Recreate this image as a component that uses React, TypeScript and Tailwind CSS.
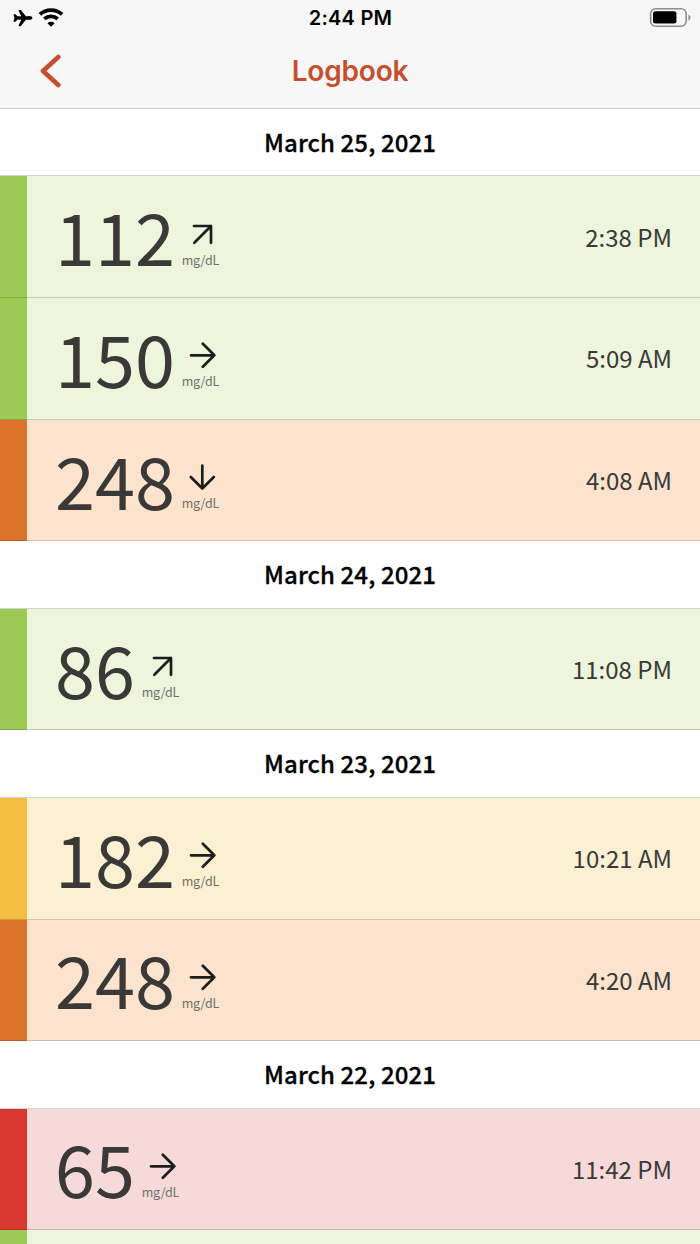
import { IoAirplane } from "react-icons/io5"

type Level = "target" | "elevated" | "high" | "low"
type Trend = "rising" | "steady" | "falling"

interface Reading {
  value: number
  trend: Trend
  level: Level
  time:  string
}

interface Day {
  date:     string
  readings: Reading[]
}

const BAR_CLASS: Record<Level, string> = {
  target:   "bg-[#9cca54]",
  elevated: "bg-[#f5be43]",
  high:     "bg-[#dd742b]",
  low:      "bg-[#d93830]",
}
const ROW_CLASS: Record<Level, string> = {
  target:   "bg-[#edf5dd]",
  elevated: "bg-[#fcf0d3]",
  high:     "bg-[#fbe3ce]",
  low:      "bg-[#f6dada]",
}
const TREND_PATH: Record<Trend, string> = {
  rising:  "M6 6H23V22.8M23 6L6.3 22.8",
  steady:  "M3 14.3H26.3M14.8 2.8L26.3 14.3L14.8 25.8",
  falling: "M14.3 2.5V25.5M2.8 14L14.3 25.5L25.8 14",
}

const DAYS: Day[] = [
  {
    date: "March 25, 2021",
    readings: [
      { value: 112, trend: "rising",  level: "target", time: "2:38 PM" },
      { value: 150, trend: "steady",  level: "target", time: "5:09 AM" },
      { value: 248, trend: "falling", level: "high",   time: "4:08 AM" },
    ],
  },
  {
    date: "March 24, 2021",
    readings: [{ value: 86, trend: "rising", level: "target", time: "11:08 PM" }],
  },
  {
    date: "March 23, 2021",
    readings: [
      { value: 182, trend: "steady", level: "elevated", time: "10:21 AM" },
      { value: 248, trend: "steady", level: "high",     time: "4:20 AM" },
    ],
  },
  {
    date: "March 22, 2021",
    readings: [{ value: 65, trend: "steady", level: "low", time: "11:42 PM" }],
  },
]

function StatusBar() {
  return (
    <div className="flex h-[35px] items-center justify-between pl-[13px] pr-[9px]">
      <div className="flex w-[77px] items-center gap-[5px]">
        <IoAirplane className="h-5 w-5 text-black" />
        <svg viewBox="0 0 26 20" className="h-5 w-[26px] shrink-0" fill="none" stroke="#000" strokeWidth="3.8">
          <path d="M1.9 6.4A16.6 16.6 0 0 1 24.1 6.4" />
          <path d="M6.3 10.9A10.3 10.3 0 0 1 19.7 10.9" />
          <path d="M13 18.8L9.4 15.2A5.2 5.2 0 0 1 16.6 15.2Z" fill="#000" stroke="none" />
        </svg>
      </div>
      <span className="text-[20px] font-semibold leading-none tracking-[0.2px] text-black">2:44 PM</span>
      <div className="flex w-20 justify-end">
        <svg viewBox="0 0 42 20" className="h-5 w-[42px]">
          <rect x="1.6" y="0.8" width="35.6" height="17.4" rx="5" fill="none" stroke="#8e8e8e" strokeWidth="1.6" />
          <rect x="4" y="3.2" width="23.4" height="12.4" rx="2.4" fill="#000" />
          <path d="M39.4 6.6C42.2 7.6 42.2 11.4 39.4 12.4Z" fill="#8e8e8e" />
        </svg>
      </div>
    </div>
  )
}

function ReadingRow({ reading }: { reading: Reading }) {
  return (
    <div className={`relative flex h-[121.66px] ${ROW_CLASS[reading.level]}`}>
      <div className={`w-[27px] ${BAR_CLASS[reading.level]}`} />
      <div className="flex flex-1 items-center justify-between pl-7 pr-7">
        <div className="flex items-center">
          <span className="pb-[4px] text-[72px] leading-[104px] text-[#3a3937]">{reading.value}</span>
          <div className="ml-[7px] flex w-[37px] flex-col items-center pt-[14px]">
            <svg viewBox="0 0 28 28" className="ml-[3px] h-7 w-7" fill="none" stroke="#1d1d1b" strokeWidth="2.7" strokeLinecap="round" strokeLinejoin="round">
              <path d={TREND_PATH[reading.trend]} />
            </svg>
            <span className="mt-[3px] text-[12.5px] leading-[18px] tracking-[-0.15px] text-[#6f706a]">mg/dL</span>
          </div>
        </div>
        <span className="pb-[1px] text-[24px] leading-9 text-[#3a3937]">{reading.time}</span>
      </div>
      <div className="absolute inset-x-0 bottom-0 h-px bg-black/17" />
    </div>
  )
}

export default function App() {
  return (
    <div className="h-[1244px] w-[700px] overflow-hidden bg-white font-['Noto_Sans_CJK_SC',sans-serif]">
      <header className="h-[109px] border-b border-[#cdcdcd] bg-[#f7f7f7] font-[Inter,sans-serif]">
        <StatusBar />
        <div className="flex h-[71px] items-center justify-between px-10">
          <svg viewBox="0 0 22 34" className="h-[34px] w-[22px]" fill="none" stroke="#c4502f" strokeWidth="4.6" strokeLinecap="round" strokeLinejoin="round">
            <path d="M18.3 3L3 17L18.3 31" />
          </svg>
          <h1 className="text-[28px] font-semibold leading-none tracking-[-0.2px] text-[#c4502f]">Logbook</h1>
          <span className="w-[22px]" />
        </div>
      </header>
      {DAYS.map((day) => (
        <section key={day.date}>
          <h2 className="flex h-[67.42px] items-center justify-center border-b border-[#d2d4ce] pb-[1.4px] text-[24px] font-medium tracking-[0.1px] text-black [-webkit-text-stroke:0.3px_black]">
            {day.date}
          </h2>
          {day.readings.map((r) => (
            <ReadingRow key={r.time} reading={r} />
          ))}
        </section>
      ))}
      {/* top edge of the next reading */}
      <div className="flex h-4 bg-[#edf5dd]">
        <div className="w-[27px] bg-[#9cca54]" />
      </div>
    </div>
  )
}
